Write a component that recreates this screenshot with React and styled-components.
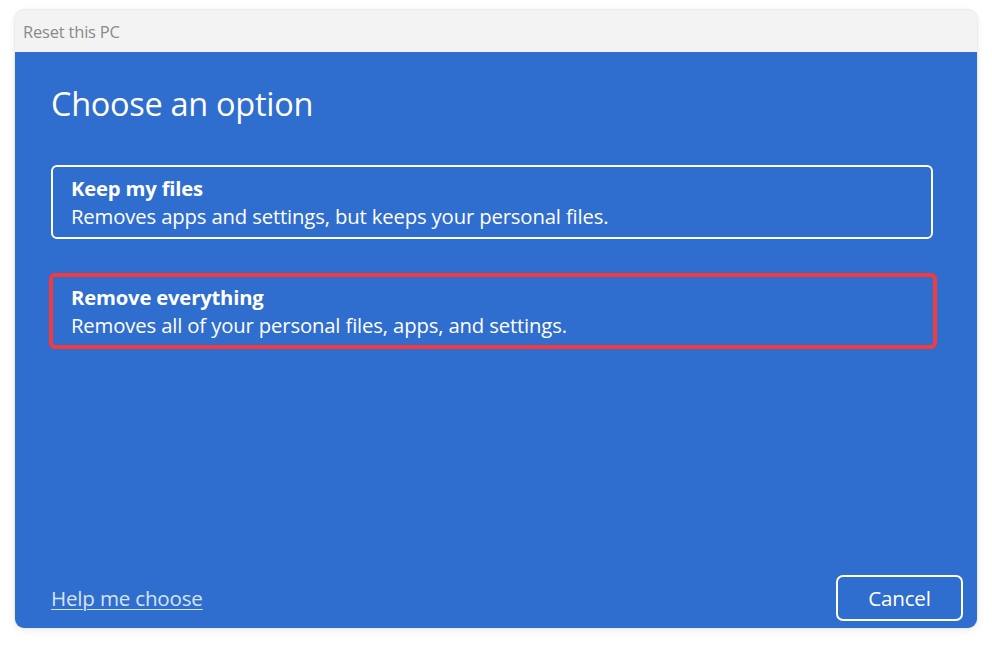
import React from "react";
import styled, { createGlobalStyle } from "styled-components";

const GlobalStyle = createGlobalStyle`
  html, body {
    margin: 0;
    padding: 0;
    background: #ffffff;
  }
  body {
    font-family: "Open Sans", "Noto Sans", "Liberation Sans", sans-serif;
  }
`;

const Page = styled.div`
  width: 992px;
  height: 646px;
  padding: 10px 15px 0 15px;
  box-sizing: border-box;
`;

const Window = styled.div`
  width: 962px;
  height: 618px;
  display: flex;
  flex-direction: column;
  border-radius: 9px;
  background: #f3f3f3;
  box-shadow: 0 0 0 1px #ececec, 0 2px 8px rgba(0, 0, 0, 0.08);
`;

const TitleBar = styled.div`
  height: 42px;
  display: flex;
  align-items: center;
  padding-left: 8px;
  font-size: 16.5px;
  color: #8a8a8a;
  letter-spacing: -0.2px;
`;

const Panel = styled.div`
  flex: 1;
  display: flex;
  flex-direction: column;
  background: #2f6dce;
  border-radius: 0 0 9px 9px;
  padding: 31px 14px 7px 36px;
  color: #ffffff;
`;

const Heading = styled.h1`
  margin: 0 0 40px 0;
  font-size: 32.5px;
  font-weight: 400;
  line-height: 42px;
  letter-spacing: -0.3px;
`;

const Options = styled.div`
  display: flex;
  flex-direction: column;
  gap: 34px;
  flex: 1;
`;

const Option = styled.div`
  width: ${(p) => (p.$selected ? "888px" : "882px")};
  margin-left: ${(p) => (p.$selected ? "-2px" : "0")};
  box-sizing: border-box;
  border: ${(p) => (p.$selected ? "4px solid #f53a3e" : "2.5px solid #ffffff")};
  border-radius: 6px;
  padding: ${(p) => (p.$selected ? "6px 18px 6px" : "7px 18px 7px")};
`;

const OptionTitle = styled.div`
  font-size: 20.3px;
  font-weight: 700;
  line-height: 28px;
  letter-spacing: -0.2px;
`;

const OptionText = styled.div`
  font-size: 20.3px;
  font-weight: 400;
  line-height: 28px;
  letter-spacing: -0.15px;
`;

const Footer = styled.div`
  display: flex;
  align-items: center;
  justify-content: space-between;
`;

const HelpLink = styled.a`
  font-size: 20.6px;
  color: #d6e4f7;
  text-decoration: underline;
  text-underline-offset: 3px;
  text-decoration-thickness: 1px;
  letter-spacing: -0.2px;
`;

const CancelButton = styled.button`
  width: 127px;
  height: 46px;
  box-sizing: border-box;
  border: 2.5px solid #ffffff;
  border-radius: 7px;
  background: transparent;
  color: #ffffff;
  font-family: inherit;
  font-size: 20.6px;
  letter-spacing: -0.2px;
`;

const options = [
  {
    title: "Keep my files",
    text: "Removes apps and settings, but keeps your personal files.",
  },
  {
    title: "Remove everything",
    text: "Removes all of your personal files, apps, and settings.",
    selected: true,
  },
];

const App = () => {
  return (
    <Page>
      <GlobalStyle />
      <Window>
        <TitleBar>Reset this PC</TitleBar>
        <Panel>
          <Heading>Choose an option</Heading>
          <Options>
            {options.map((o) => (
              <Option key={o.title} $selected={o.selected}>
                <OptionTitle>{o.title}</OptionTitle>
                <OptionText>{o.text}</OptionText>
              </Option>
            ))}
          </Options>
          <Footer>
            <HelpLink>Help me choose</HelpLink>
            <CancelButton>Cancel</CancelButton>
          </Footer>
        </Panel>
      </Window>
    </Page>
  );
};

export default App;
